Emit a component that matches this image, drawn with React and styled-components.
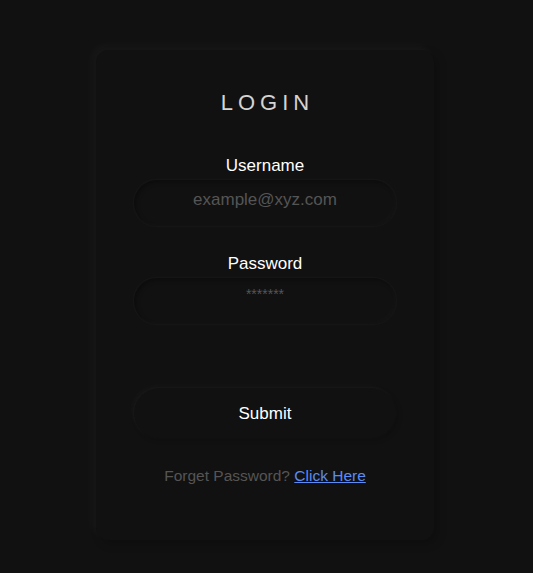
import React from "react";
import styled, { createGlobalStyle } from "styled-components";

const Global = createGlobalStyle`
  html, body { margin: 0; padding: 0; background: #111111; }
  body { font-family: "Liberation Sans", Arial, sans-serif; }
`;

const Page = styled.div`
  min-height: 573px;
  padding: 50px 0 0 96px;
  box-sizing: border-box;
`;

const Card = styled.form`
  width: 338px;
  height: 490px;
  box-sizing: border-box;
  background: #111111;
  border-radius: 12px;
  box-shadow: -4px -4px 10px rgba(255, 255, 255, 0.035),
    4px 4px 10px rgba(0, 0, 0, 0.2);
  display: flex;
  flex-direction: column;
  align-items: center;
  padding-top: 41px;
`;

const Title = styled.h1`
  margin: 0;
  font-weight: 400;
  font-size: 22px;
  letter-spacing: 5px;
  color: #d4d4d4;
  line-height: 24px;
  padding-left: 5px;
`;

const Field = styled.div`
  display: flex;
  flex-direction: column;
  align-items: center;
  margin-top: ${(p) => p.$mt}px;
`;

const Label = styled.label`
  font-size: 17px;
  color: #ffffff;
  line-height: 20px;
`;

const Input = styled.input`
  margin-top: 4px;
  width: 262px;
  height: 46px;
  box-sizing: border-box;
  border: none;
  outline: none;
  border-radius: 24px;
  background: #111111;
  box-shadow: inset 2px 2px 4px rgba(0, 0, 0, 0.3),
    inset -2px -2px 4px rgba(255, 255, 255, 0.02),
    0 0 2px 1px rgba(255, 255, 255, 0.03);
  text-align: center;
  font-family: "Liberation Sans", Arial, sans-serif;
  font-size: ${(p) => p.$fs}px;
  color: #dddddd;
  padding: ${(p) => p.$pad};
  &::placeholder {
    color: #555555;
  }
`;

const Button = styled.button`
  margin-top: 64px;
  width: 262px;
  height: 50px;
  border: none;
  border-radius: 26px;
  background: #111111;
  box-shadow: -2px -2px 5px rgba(255, 255, 255, 0.03),
    2px 2px 5px rgba(0, 0, 0, 0.2),
    0 0 2px 1px rgba(255, 255, 255, 0.02);
  color: #ffffff;
  font-family: "Liberation Sans", Arial, sans-serif;
  font-size: 17px;
  padding: 2px 0 0;
  cursor: pointer;
`;

const Footer = styled.p`
  margin: 29px 0 0;
  font-size: 15.5px;
  color: #555555;
`;

const Link = styled.a`
  color: #5b8cf4;
  text-decoration: underline;
`;

export default function App() {
  return (
    <>
      <Global />
      <Page>
        <Card onSubmit={(e) => e.preventDefault()}>
          <Title>LOGIN</Title>
          <Field $mt={41}>
            <Label>Username</Label>
            <Input $fs={17} $pad="0 0 6px" placeholder="example@xyz.com" />
          </Field>
          <Field $mt={28}>
            <Label>Password</Label>
            <Input $fs={14} $pad="0 0 14px" type="password" placeholder="*******" />
          </Field>
          <Button type="submit">Submit</Button>
          <Footer>
            Forget Password? <Link href="#">Click Here</Link>
          </Footer>
        </Card>
      </Page>
    </>
  );
}
